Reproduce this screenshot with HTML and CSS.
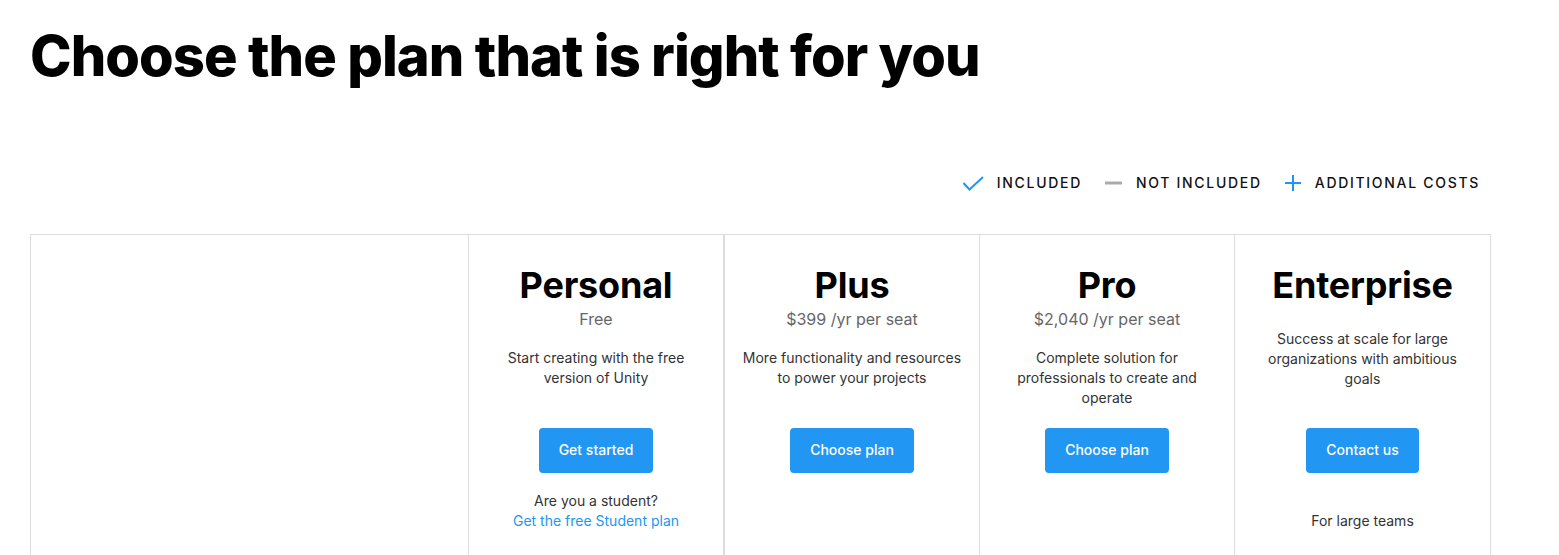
FILE: index.html
```html
<!DOCTYPE html>
<html lang="en">
<head>
<meta charset="utf-8">
<title>Choose the plan that is right for you</title>
<link rel="stylesheet" href="styles.css">
</head>
<body>
<main class="page">
  <h1 class="page-title">Choose the plan that is right for you</h1>

  <ul class="legend">
    <li class="legend-item">
      <svg class="legend-icon" width="20" height="20" viewBox="0 0 20 20"><path d="M0.5 10 L6.5 16.5 L20 4" fill="none" stroke="#2196f3" stroke-width="2"/></svg>
      <span>INCLUDED</span>
    </li>
    <li class="legend-item">
      <svg class="legend-icon" width="17" height="20" viewBox="0 0 17 20"><path d="M0 10 H17" fill="none" stroke="#aaaaaa" stroke-width="3"/></svg>
      <span>NOT INCLUDED</span>
    </li>
    <li class="legend-item">
      <svg class="legend-icon" width="16" height="20" viewBox="0 0 16 20"><path d="M0 10 H16 M8 2 V18" fill="none" stroke="#2196f3" stroke-width="2"/></svg>
      <span>ADDITIONAL COSTS</span>
    </li>
  </ul>

  <section class="plans">
    <div class="plans-spacer"></div>

    <article class="plan plan--first">
      <div class="plan-top">
        <h2 class="plan-name">Personal</h2>
        <p class="plan-price">Free</p>
        <p class="plan-desc">Start creating with the free version of Unity</p>
      </div>
      <a class="plan-btn" href="#">Get started</a>
      <p class="plan-note">Are you a student?<br><a class="plan-link" href="#">Get the free Student plan</a></p>
    </article>

    <article class="plan">
      <div class="plan-top">
        <h2 class="plan-name">Plus</h2>
        <p class="plan-price">$399 /yr per seat</p>
        <p class="plan-desc">More functionality and resources to power your projects</p>
      </div>
      <a class="plan-btn" href="#">Choose plan</a>
    </article>

    <article class="plan">
      <div class="plan-top">
        <h2 class="plan-name">Pro</h2>
        <p class="plan-price">$2,040 /yr per seat</p>
        <p class="plan-desc">Complete solution for professionals to create and operate</p>
      </div>
      <a class="plan-btn" href="#">Choose plan</a>
    </article>

    <article class="plan">
      <div class="plan-top">
        <h2 class="plan-name">Enterprise</h2>
        <p class="plan-desc plan-desc--no-price">Success at scale for large organizations with ambitious goals</p>
      </div>
      <a class="plan-btn" href="#">Contact us</a>
      <p class="plan-note plan-note--low">For large teams</p>
    </article>
  </section>
</main>
</body>
</html>
```

FILE: styles.css
```css
* { box-sizing: border-box; }

html, body {
  margin: 0;
  padding: 0;
  background: #ffffff;
}

body {
  font-family: Inter, "Noto Sans", "Liberation Sans", sans-serif;
  color: #333333;
}

.page {
  padding: 0 30px;
  width: 1521px;
}

.page-title {
  margin: 23px 0 0 0;
  font-size: 56px;
  line-height: 67px;
  font-weight: 800;
  color: #000000;
  letter-spacing: -0.95px;
}

.legend {
  list-style: none;
  margin: 83px 0 0 0;
  padding: 0 11px 0 0;
  display: flex;
  justify-content: flex-end;
  align-items: center;
  gap: 23px;
  height: 20px;
}

.legend-item {
  display: flex;
  align-items: center;
  gap: 14px;
  font-size: 14px;
  font-weight: 500;
  line-height: 20px;
  letter-spacing: 1.7px;
  color: #111111;
}

.legend-icon {
  display: block;
  flex: none;
  overflow: visible;
}

.plans {
  margin-top: 41px;
  display: grid;
  grid-template-columns: 437px 256px 255px 255px 256px;
  border: 1px solid #dddddd;
  border-bottom: none;
  height: 400px;
}

.plan {
  border-left: 1px solid #dddddd;
  display: flex;
  flex-direction: column;
  align-items: center;
  text-align: center;
  padding: 28px 10px 0;
}

.plan--first {
  border-right: 1px solid #dddddd;
}

.plan-top {
  min-height: 165px;
  display: flex;
  flex-direction: column;
  align-items: center;
}

.plan-name {
  margin: 0;
  font-size: 36px;
  line-height: 44px;
  font-weight: 700;
  color: #000000;
  letter-spacing: -0.2px;
}

.plan-price {
  margin: 0;
  font-size: 16px;
  line-height: 24px;
  color: #666666;
}

.plan-desc {
  margin: 17px 0 0 0;
  font-size: 14px;
  line-height: 20px;
  color: #333333;
  max-width: 225px;
}

.plan-desc--no-price {
  margin-top: 22px;
  max-width: 200px;
}

.plan-btn {
  display: inline-flex;
  align-items: center;
  justify-content: center;
  height: 45px;
  padding: 0 20px 2px;
  background: #2196f3;
  color: #ffffff;
  border-radius: 4px;
  font-size: 14px;
  font-weight: 500;
  line-height: 20px;
  text-decoration: none;
}

.plan-note {
  margin: 18px 0 0 0;
  font-size: 14px;
  line-height: 20px;
  color: #333333;
}

.plan-note--low {
  margin-top: 38px;
}

.plan-link {
  color: #2196f3;
  text-decoration: none;
}
```
